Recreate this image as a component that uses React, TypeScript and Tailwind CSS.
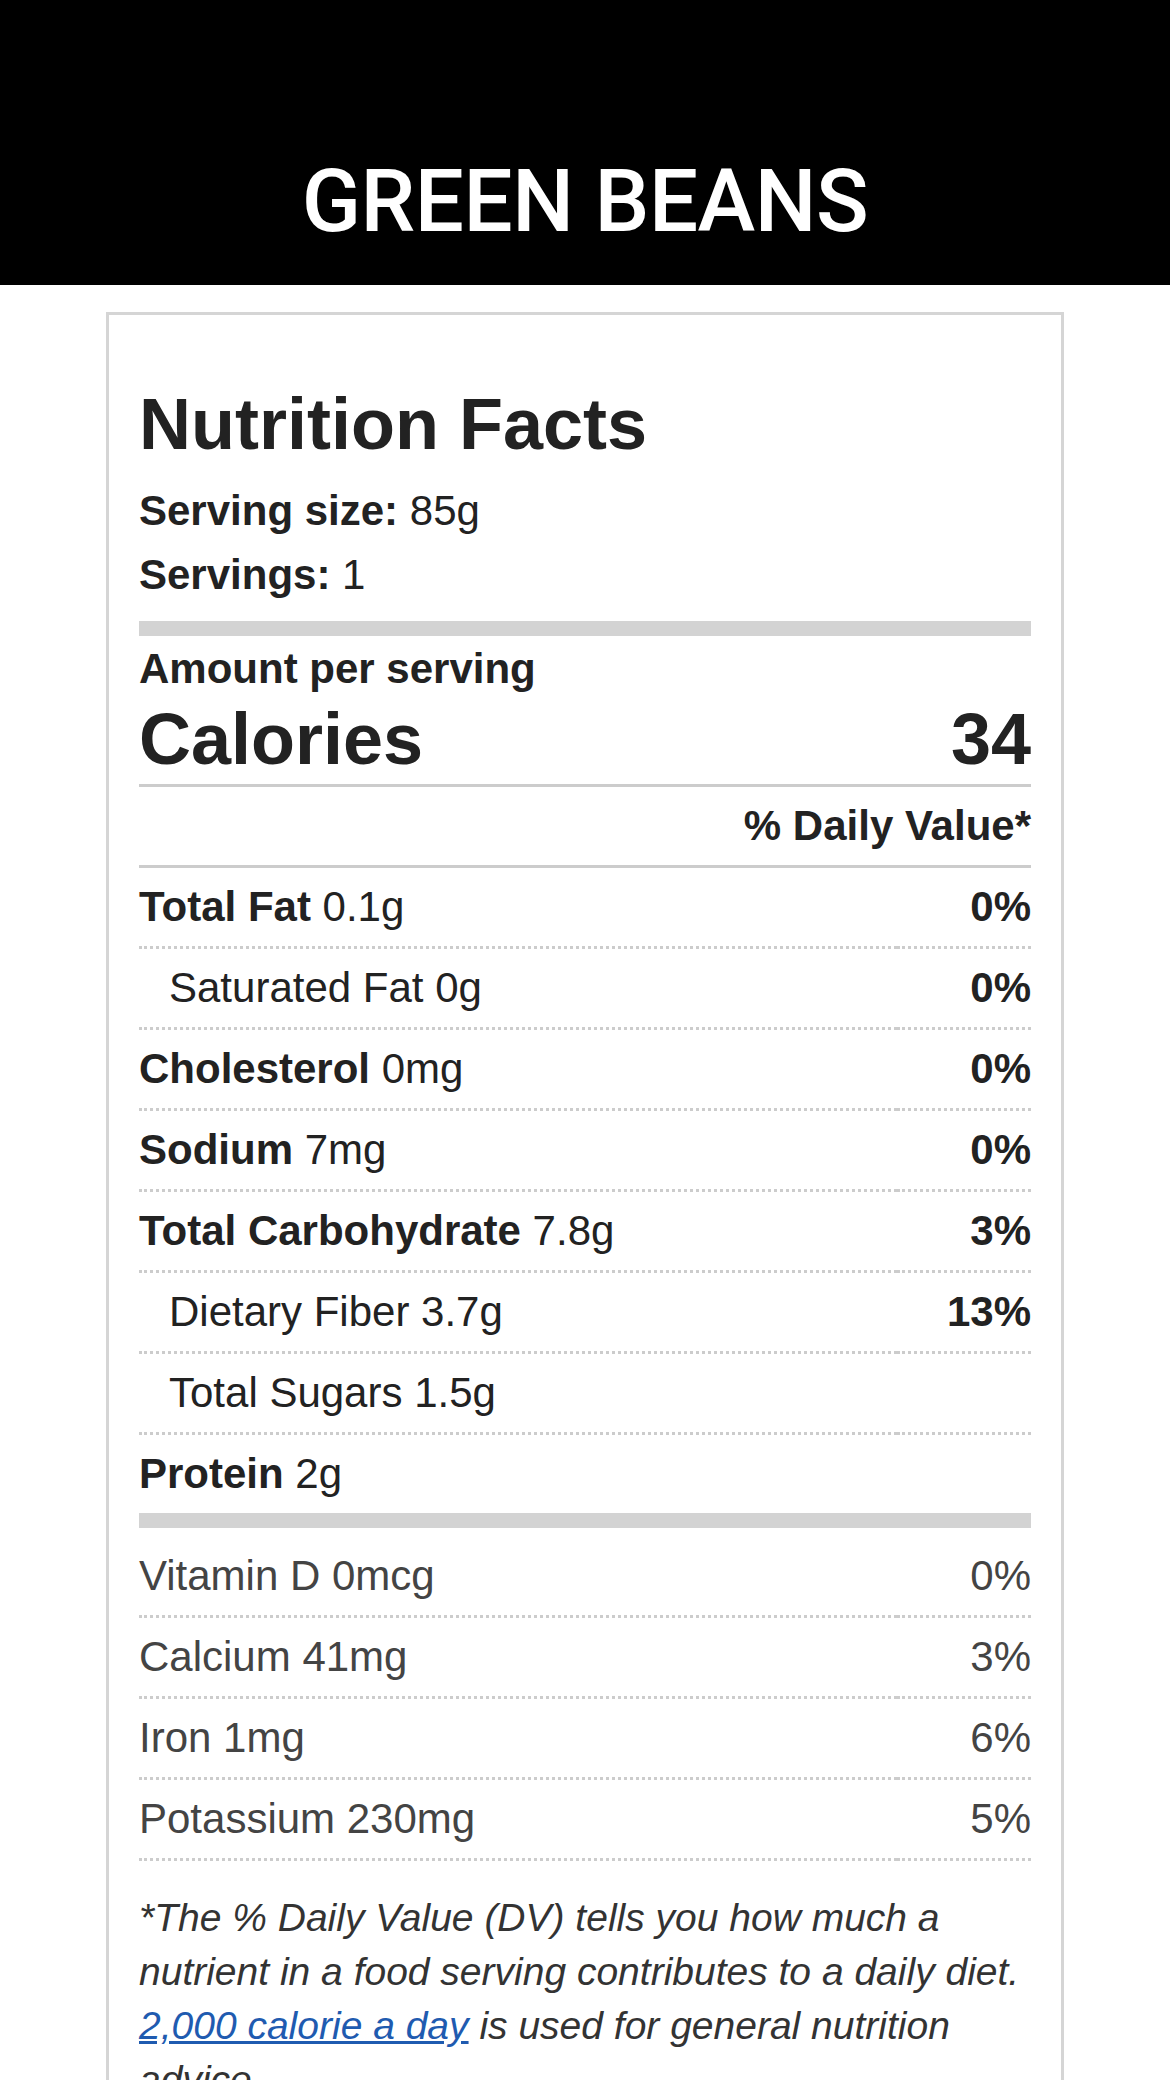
type Row = {
  name: string;
  amount: string;
  dv: string;
  indent?: boolean;
  last?: boolean;
};

const rows: Row[] = [
  { name: "Total Fat", amount: "0.1g", dv: "0%" },
  { name: "Saturated Fat", amount: "0g", dv: "0%", indent: true },
  { name: "Cholesterol", amount: "0mg", dv: "0%" },
  { name: "Sodium", amount: "7mg", dv: "0%" },
  { name: "Total Carbohydrate", amount: "7.8g", dv: "3%" },
  { name: "Dietary Fiber", amount: "3.7g", dv: "13%", indent: true },
  { name: "Total Sugars", amount: "1.5g", dv: "", indent: true },
  { name: "Protein", amount: "2g", dv: "", last: true },
];

const minerals = [
  { name: "Vitamin D", amount: "0mcg", dv: "0%" },
  { name: "Calcium", amount: "41mg", dv: "3%" },
  { name: "Iron", amount: "1mg", dv: "6%" },
  { name: "Potassium", amount: "230mg", dv: "5%" },
];

function NutrientRow({ row }: { row: Row }) {
  const line = row.last ? "" : "border-b-[3px] border-dotted border-[#cccccc]";
  return (
    <div className="flex">
      <div className={`flex-1 py-[12px] leading-[54px] ${line} ${row.indent ? "pl-[30px]" : ""}`}>
        {row.indent ? (
          <span>
            {row.name} {row.amount}
          </span>
        ) : (
          <span>
            <span className="font-bold">{row.name}</span> {row.amount}
          </span>
        )}
      </div>
      <div className={`w-[134px] py-[12px] leading-[54px] text-right font-bold ${line}`}>{row.dv}</div>
    </div>
  );
}

export default function App() {
  return (
    <main className="min-h-screen w-full bg-white">
      {/* Title bar */}
      <header className="h-[285px] bg-black pt-[156px] text-center">
        <h1 className="font-['Roboto',sans-serif] text-[87px] leading-[90px] font-medium tracking-[-0.5px] text-white">
          GREEN BEANS
        </h1>
      </header>

      {/* Label card */}
      <section className="mx-[106px] mt-[27px] border-[3px] border-[#d5d5d5] px-[30px] pt-[73px] pb-[40px] font-['Liberation_Sans',Arial,sans-serif] text-[42px] text-[#222222]">
        <h2 className="text-[72px] leading-[72px] font-bold">Nutrition Facts</h2>
        <p className="mt-[24px] leading-[54px]">
          <span className="font-bold">Serving size:</span> 85g
        </p>
        <p className="mt-[10px] leading-[54px]">
          <span className="font-bold">Servings:</span> 1
        </p>

        <div className="mt-[19px] h-[15px] bg-[#d3d3d3]" />

        <p className="mt-[6px] leading-[54px] font-bold">Amount per serving</p>
        <div className="mt-[1px] flex justify-between border-b-[3px] border-[#cccccc] pb-[3px] text-[72px] leading-[84px] font-bold">
          <span>Calories</span>
          <span>34</span>
        </div>
        <div className="border-b-[3px] border-[#cccccc] py-[12px] text-right leading-[54px] font-bold">
          % Daily Value*
        </div>

        {rows.map((r) => (
          <NutrientRow key={r.name} row={r} />
        ))}

        <div className="h-[15px] bg-[#d3d3d3]" />

        <div className="mt-[9px] text-[#444444]">
          {minerals.map((m) => (
            <div key={m.name} className="flex">
              <div className="flex-1 border-b-[3px] border-dotted border-[#cccccc] py-[12px] leading-[54px]">
                {m.name} {m.amount}
              </div>
              <div className="w-[134px] border-b-[3px] border-dotted border-[#cccccc] py-[12px] text-right leading-[54px]">
                {m.dv}
              </div>
            </div>
          ))}
        </div>

        <p className="mt-[30px] text-[39px] leading-[54px] text-[#333333] italic">
          *The % Daily Value (DV) tells you how much a nutrient in a food serving contributes to a daily diet.{" "}
          <a href="#" className="text-[#1f5bb0] underline">
            2,000 calorie a day
          </a>{" "}
          is used for general nutrition advice.
        </p>
      </section>
    </main>
  );
}
